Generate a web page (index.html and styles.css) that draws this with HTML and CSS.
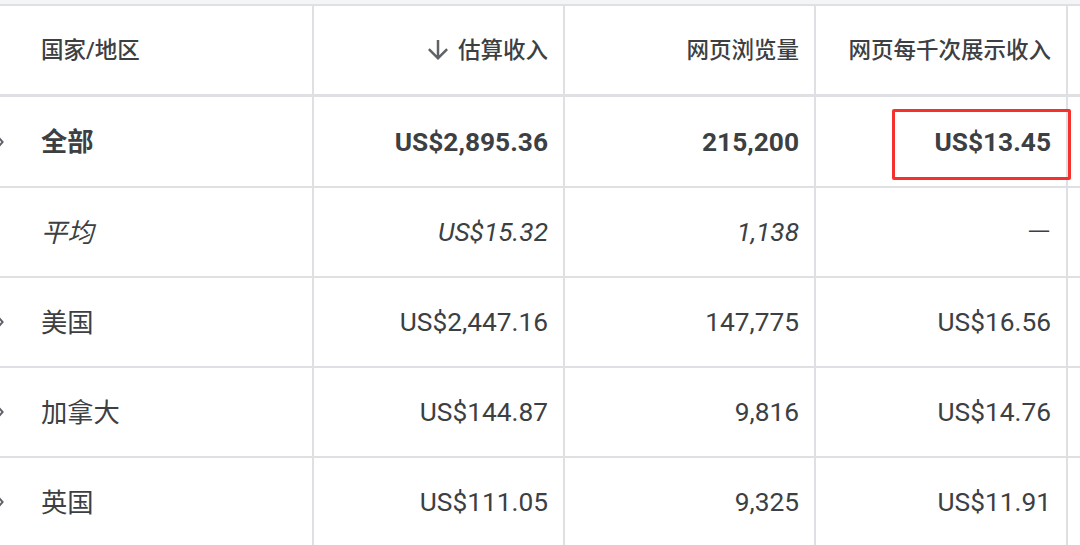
FILE: index.html
```html
<!DOCTYPE html>
<html lang="zh-CN">
<head>
<meta charset="utf-8">
<title>国家/地区报告</title>
<link rel="stylesheet" href="styles.css">
</head>
<body>
<div class="page">
  <div class="topband"></div>
  <div class="table">
    <div class="cell head first"><span class="exp"></span><span class="cjk">国家/地区</span></div>
    <div class="cell head num"><svg class="sort" viewBox="0 0 24 24" width="30" height="30"><path d="M20 12l-1.41-1.41L13 16.17V4h-2v12.17l-5.58-5.59L4 12l8 8 8-8z"/></svg><span class="cjk">估算收入</span></div>
    <div class="cell head num"><span class="cjk">网页浏览量</span></div>
    <div class="cell head num"><span class="cjk">网页每千次展示收入</span></div>
    <div class="cell head extra"></div>

    <div class="cell first total"><span class="exp"><svg viewBox="0 0 4 10" width="4" height="10"><path d="M-1 1 L2.6 5 L-1 9" /></svg></span><span class="cjk">全部</span></div>
    <div class="cell num total">US$2,895.36</div>
    <div class="cell num total">215,200</div>
    <div class="cell num total mark">US$13.45<span class="highlight"></span></div>
    <div class="cell extra"></div>

    <div class="cell first avg"><span class="exp"></span><span class="cjk">平均</span></div>
    <div class="cell num avg">US$15.32</div>
    <div class="cell num avg">1,138</div>
    <div class="cell num dash">—</div>
    <div class="cell extra"></div>

    <div class="cell first"><span class="exp"><svg viewBox="0 0 4 10" width="4" height="10"><path d="M-1 1 L2.6 5 L-1 9" /></svg></span><span class="cjk">美国</span></div>
    <div class="cell num">US$2,447.16</div>
    <div class="cell num">147,775</div>
    <div class="cell num">US$16.56</div>
    <div class="cell extra"></div>

    <div class="cell first"><span class="exp"><svg viewBox="0 0 4 10" width="4" height="10"><path d="M-1 1 L2.6 5 L-1 9" /></svg></span><span class="cjk">加拿大</span></div>
    <div class="cell num">US$144.87</div>
    <div class="cell num">9,816</div>
    <div class="cell num">US$14.76</div>
    <div class="cell extra"></div>

    <div class="cell first"><span class="exp"><svg viewBox="0 0 4 10" width="4" height="10"><path d="M-1 1 L2.6 5 L-1 9" /></svg></span><span class="cjk">英国</span></div>
    <div class="cell num">US$111.05</div>
    <div class="cell num">9,325</div>
    <div class="cell num">US$11.91</div>
    <div class="cell extra"></div>
  </div>
</div>
</body>
</html>
```

FILE: styles.css
```css
html, body {
  margin: 0;
  padding: 0;
  background: #ffffff;
}

body {
  width: 1080px;
  height: 545px;
  overflow: hidden;
  font-family: Roboto, "Noto Sans CJK SC", sans-serif;
  color: #3c4043;
}

.page {
  display: flex;
  flex-direction: column;
}

.topband {
  height: 4px;
  background: #f4f5f7;
  border-bottom: 2px solid #dfe0e4;
}

.table {
  display: grid;
  grid-template-columns: 314px 251px 251px 252px 60px;
  grid-template-rows: 91px 91px 90px 90px 90px 90px;
}

.cell {
  box-sizing: border-box;
  display: flex;
  align-items: center;
  border-right: 2px solid #dfe0e4;
  border-bottom: 2px solid #dfe0e4;
  font-size: 26.3px;
  white-space: nowrap;
}

.cjk {
  position: relative;
  top: -2px;
}

.head {
  font-size: 22.5px;
  font-weight: 500;
  border-bottom-width: 3px;
  padding-bottom: 1px;
}

.first {
  padding-left: 0;
}

.num {
  justify-content: flex-end;
  padding-right: 15px;
}

.exp {
  width: 41px;
  height: 10px;
  display: flex;
  align-items: center;
  flex: none;
}

.exp svg path {
  fill: none;
  stroke: #5f6368;
  stroke-width: 2;
}

.sort {
  fill: #5f6368;
  margin-right: 5px;
  flex: none;
}

.total {
  font-weight: 700;
}

.avg {
  font-style: italic;
}

.dash {
  font-size: 31px;
  font-weight: 300;
}

.mark {
  position: relative;
}

.highlight {
  position: absolute;
  left: 76px;
  top: 12px;
  width: 179px;
  height: 71px;
  box-sizing: border-box;
  border: 3px solid #f4312c;
  border-radius: 2px;
}

.extra {
  border-right: none;
}
```
